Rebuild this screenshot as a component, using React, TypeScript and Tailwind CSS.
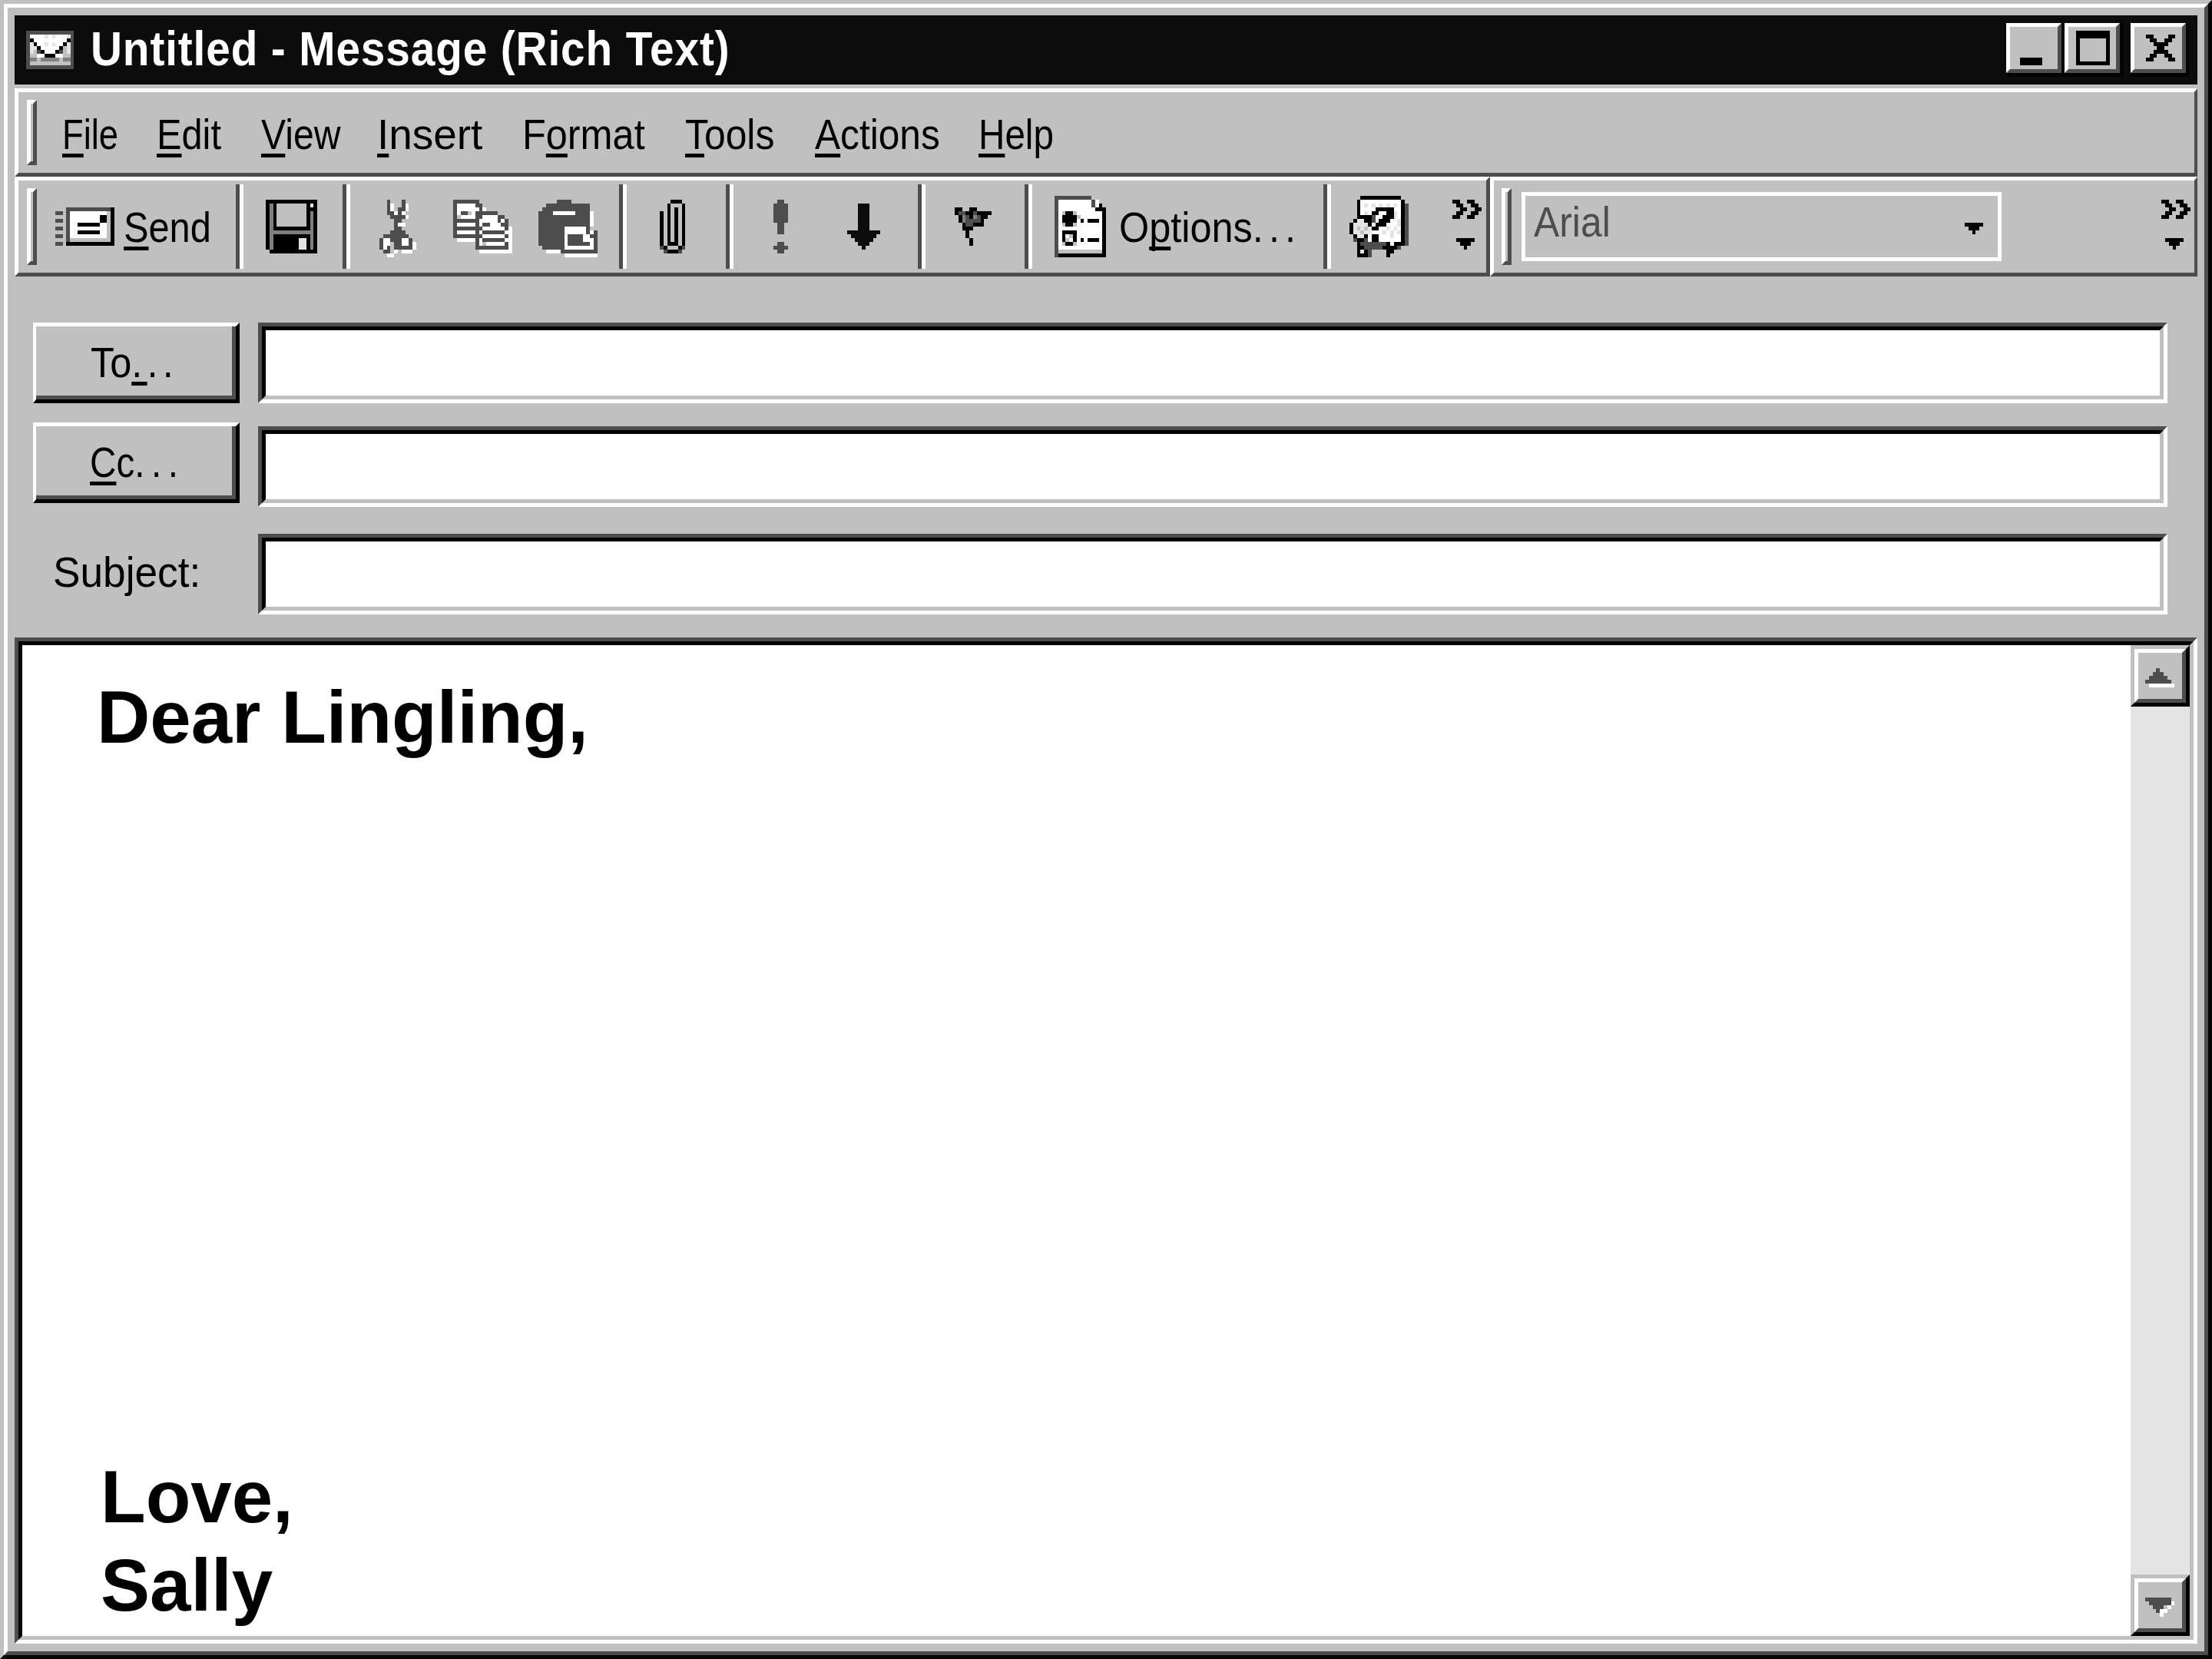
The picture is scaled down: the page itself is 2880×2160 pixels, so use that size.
import type { ReactNode } from 'react';

const COLORS: Record<string, string> = {
  k: '#000000',
  n: '#0c0c0c',
  d: '#4d4d4d',
  m: '#808080',
  c: '#c0c0c0',
  l: '#e4e4e4',
  w: '#ffffff',
};

// source bitmap was 600x450 blown up 4.8 times
function Bitmap({ rows, className = '' }: { rows: string[]; className?: string }) {
  const cols = Math.max(...rows.map((r) => r.length));
  return (
    <svg
      className={`shrink-0 ${className}`}
      style={{ width: cols * 4.8, height: rows.length * 5 }}
      viewBox={`0 0 ${cols} ${rows.length}`}
      preserveAspectRatio="none"
      shapeRendering="crispEdges"
    >
      {rows.map((row, y) =>
        row.split('').map((ch, x) =>
          COLORS[ch] ? <rect key={`${x}-${y}`} x={x} y={y} width={1.02} height={1.02} fill={COLORS[ch]} /> : null,
        ),
      )}
    </svg>
  );
}

const ENVELOPE = [
  'ddddddddddddd',
  'dwwwwlwlwwwld',
  'dkwwwwwwwwwkd',
  'dlkwwlwlwwkld',
  'dllkwwwwwkcld',
  'dlcdkwwwkdcld',
  'dccwwkkkwwccd',
  'dmmcmmmmmcmmd',
  'dcccccccccccd',
  'ddddddddddddd',
];
const SEND = [
  '...ddddddddddddk',
  'dd.dwwwwwwwwww.k',
  '...dwwwwwwwwkk.k',
  'dd.dwwwwwwwwkk.k',
  '...dwwkkkkkkww.k',
  'dd.dwwwwwwwwww.k',
  '...dwwkkkkkkww.k',
  'dd.dwwwwwwwwww.k',
  '...d...........k',
  'dd.kkkkkkkkkkkkk',
];
const FLOPPY = [
  'kkkkkkkkkkkkkk',
  'kmk........klk',
  'kmk........kkk',
  'kmk........kmk',
  'kmk........kmk',
  'kmk........kmk',
  'kmk........kmk',
  'kmkkkkkkkkkkmk',
  'kmmmmmmmmmmmmk',
  'kmkkkkkkkkkkmk',
  'kmkkkkkkkllkmk',
  'kmkkkkkkkllkmk',
  'kmkkkkkkkllkmk',
  '.kkkkkkkkkkkkk',
];
const SCISSORS = [
  '..d...d...',
  '..dw..dw..',
  '..dw.ddw..',
  '..ddwdw...',
  '...ddddw..',
  '....dd....',
  '....dww...',
  '....dd....',
  '...dddd...',
  '.ddddddd..',
  'dwwdddwwd.',
  'dww.ddwwdw',
  'dwd.dddddw',
  '.dd.w.www.',
  '..ww......',
];
const COPY = [
  'ddddddd.........',
  'dwwwwwdd........',
  'dwwwwwwdw.......',
  'dwdd.wdddddd....',
  'd.wwwwddwwwwdd..',
  'dddddddwwwwwdwd.',
  'dwwwwwdwddwwwdd.',
  'ddddddddwwwwwwdw',
  'dwwwwwdwddddddww',
  'ddddddddwwwwwwdw',
  '.wwwwwdwddddddww',
  '......dw.wwwwwdw',
  '......dddddddddw',
  '.......wwwwwwwww',
];
const PASTE = [
  '.....dddd.......',
  '..dddddddddddd..',
  '.ddddddddddddd..',
  'ddddwwwwwwddddw.',
  'ddddddddddddddw.',
  'ddddddddddddddw.',
  'ddddddddddddddw.',
  'dddddddwwwwwwd..',
  'dddddddwwwwwwdwd',
  'dddddddwddddwwdd',
  'dddddddwddddwwwd',
  'dddddddwddddddwd',
  '.ddddddwwwwwwwwd',
  '..wwwwdddddddddd',
  '.......wwwwwwwww',
];
const CLIP = [
  '...kkk.',
  '..k...k',
  '..k.k.k',
  'k.k.k.k',
  'k.k.k.k',
  'k.k.k.k',
  'k.k.k.k',
  'k.k.k.k',
  'k.k.k.k',
  'k.k.k.k',
  'k.k.k.k',
  'k.kkk.k',
  'dk...kd',
  '.dkkkd.',
];
const IMPORTANT = ['.dd.', 'dddd', 'dddd', 'dddd', 'dddd', 'dddd', '.dd.', '.dd.', '.dd.', '....', '....', '.dd.', 'dddd', '.dd.'];
const LOW = [
  '...nnn...',
  '...nnn...',
  '...nnn...',
  '...nnn...',
  '...nnn...',
  '...nnn...',
  '...nnn...',
  'nnnnnnnnn',
  '.nnnnnnn.',
  '..nnnnn..',
  '...nnn...',
  '....n....',
];
const FLAG = [
  'kk..kk....',
  'kddkkdkkkk',
  '.kmdkmdkk.',
  '.kmddddk..',
  '..kddkkk..',
  '..kkk.....',
  '...k......',
  '...k......',
  '....k.....',
  '....k.....',
];
const OPTIONS = [
  'dddddddddd....',
  'dwwwwwwwwwdw..',
  'dwwwwwwwwwdwk.',
  'dwwwwwwwwwwkkk',
  'dw.kk.wwwwwwwk',
  'dwkkkk.wwwwwwk',
  'dwkkkkwkwkkkwk',
  'dw.kk.wwwwwwwk',
  'dwwwwwwwwwwwwk',
  'dwkkkkwwwwwwwk',
  'dwkw.kwwwwwwwk',
  'dwk.wkwkwkkkwk',
  'dw.kk.wwwwwwwk',
  'dwwwwwwwwwwwwk',
  'd............k',
  'dkkkkkkkkkkkkk',
];
const HELP = [
  '...kkkkkkkkkkk..',
  '..kwwwwwwwwwwwk.',
  '..kwlwlwlwlwlwkd',
  '..kwwwwkkkkkwwkd',
  '..kwlwkkwwkklwkd',
  '..kkkkdwwkkklwkd',
  '.kllkkdwkkkwwlkd',
  'kllllkwkkkwwwlkd',
  'klclclkkwwlwlwkd',
  'kllcllwwwlwlwlkd',
  '.kllkwkkwwwlwwkd',
  '.dkkdwkkwwwwwwkd',
  '..kdddddddkwkkkd',
  '..kkdddddkkkkd..',
  '..klkd....kk....',
  '..kkkd....k.....',
];
const CHEVRON = ['kk..kk..', '.kk..kk.', '..kk..kk', '.kk..kk.', 'kk..kk..'];
const DROP = ['kkkkk', '.kkk.', '..k..'];
const CLOSE = ['kk....kk', '.kk..kk.', '..kkkk..', '...kk...', '..kkkk..', '.kk..kk.', 'kk....kk'];
const SCROLL_UP = ['...d....', '..ddd...', '.ddddd..', 'ddddddd.', '.wwwwwww'];
const SCROLL_DOWN = ['ddddddd.', '.ddddddw', '..ddd.w.', '...dww..', '....w...'];

const UI_FONT = "font-['Liberation_Sans',sans-serif]";

function Key({ children }: { children: ReactNode }) {
  return <span className="underline decoration-[5px] underline-offset-[6px] [text-decoration-skip-ink:none]">{children}</span>;
}

function Dots({ className, children = '...' }: { className: string; children?: ReactNode }) {
  return <span className={className}>{children}</span>;
}

function Gripper({ className = '' }: { className?: string }) {
  return <div className={`w-[13px] mt-[10px] shrink-0 border-t-[5px] border-l-[5px] border-t-white border-l-white border-r-[5px] border-b-[5px] border-r-[#4d4d4d] border-b-[#4d4d4d] ${className}`} />;
}

function Sep({ className = '' }: { className?: string }) {
  return <div className={`w-[10px] h-[110px] mt-[5px] shrink-0 border-l-[5px] border-r-[5px] border-l-[#4d4d4d] border-r-white ${className}`} />;
}

function Overflow({ className = '' }: { className?: string }) {
  return (
    <div className={`flex flex-col items-start shrink-0 mt-[25px] ${className}`}>
      <Bitmap rows={CHEVRON} />
      <Bitmap rows={DROP} className="mt-[25px] ml-[5px]" />
    </div>
  );
}

function CaptionButton({ children, className = '' }: { children: ReactNode; className?: string }) {
  return (
    <div className={`w-[77px] h-[70px] shrink-0 border-r-[5px] border-b-[5px] border-r-[#050505] border-b-[#050505] ${className}`}>
      <div className="w-full h-full flex bg-[#c0c0c0] border-t-[5px] border-l-[5px] border-t-white border-l-white border-r-[5px] border-b-[5px] border-r-[#4d4d4d] border-b-[#4d4d4d]">
        {children}
      </div>
    </div>
  );
}

function RaisedButton({ children }: { children: ReactNode }) {
  return (
    <div className="w-[269px] h-[105px] shrink-0 border-t-[5px] border-l-[4px] border-t-white border-l-white border-r-[5px] border-b-[5px] border-r-black border-b-black">
      <div className={`w-full h-full flex items-start pt-[19px] text-[56px] leading-none text-black border-r-[5px] border-b-[5px] border-r-[#4d4d4d] border-b-[#4d4d4d] ${UI_FONT}`}>
        {children}
      </div>
    </div>
  );
}

function Field({ className = '' }: { className?: string }) {
  return (
    <div className={`flex-1 h-[105px] border-t-[5px] border-l-[5px] border-t-[#4d4d4d] border-l-[#4d4d4d] border-r-[5px] border-b-[5px] border-r-white border-b-white ${className}`}>
      <div className="w-full h-full bg-white border-t-[5px] border-l-[5px] border-t-black border-l-black border-r-[5px] border-b-[5px] border-r-[#c0c0c0] border-b-[#c0c0c0]" />
    </div>
  );
}

function ScrollButton({ rows }: { rows: string[] }) {
  return (
    <div className="w-full h-[80px] shrink-0 border-t-[5px] border-l-[5px] border-t-[#c0c0c0] border-l-[#c0c0c0] border-r-[5px] border-b-[5px] border-r-black border-b-black">
      <div className="w-full h-full flex items-center justify-center bg-[#c0c0c0] border-t-[5px] border-l-[5px] border-t-white border-l-white border-r-[5px] border-b-[5px] border-r-[#4d4d4d] border-b-[#4d4d4d]">
        <Bitmap rows={rows} className="mt-[4px]" />
      </div>
    </div>
  );
}

const MENUS: { box: string; text: string; label: ReactNode }[] = [
  { box: 'w-[123px]', text: 'scale-x-[0.81]', label: <><Key>F</Key>ile</> },
  { box: 'w-[136px]', text: 'scale-x-[0.87]', label: <><Key>E</Key>dit</> },
  { box: 'w-[151px]', text: 'scale-x-[0.86]', label: <><Key>V</Key>iew</> },
  { box: 'w-[189px]', text: 'scale-x-[0.98]', label: <><Key>I</Key>nsert</> },
  { box: 'w-[212px]', text: 'scale-x-[0.90]', label: <>F<Key>o</Key>rmat</> },
  { box: 'w-[169px]', text: 'scale-x-[0.89]', label: <><Key>T</Key>ools</> },
  { box: 'w-[213px]', text: 'scale-x-[0.886]', label: <><Key>A</Key>ctions</> },
  { box: 'w-[110px]', text: 'scale-x-[0.85]', label: <><Key>H</Key>elp</> },
];

export default function App() {
  return (
    <div className="w-[2880px] h-[2160px] bg-[#c0c0c0] border-t-[5px] border-l-[5px] border-t-[#c0c0c0] border-l-[#c0c0c0] border-r-[5px] border-b-[5px] border-r-[#050505] border-b-[#050505]">
      <div className="w-full h-full flex flex-col pt-[10px] pb-[10px] pl-[9px] pr-[9px] border-t-[5px] border-l-[5px] border-t-white border-l-white border-r-[5px] border-b-[5px] border-r-[#4d4d4d] border-b-[#4d4d4d]">
        {/* Title bar */}
        <div className="h-[90px] shrink-0 flex items-start bg-[#0c0c0c]">
          <Bitmap rows={ENVELOPE} className="mt-[20px] ml-[15px]" />
          <span className="ml-[22px] mt-[12px] inline-block origin-left scale-x-[0.9] whitespace-nowrap text-[63px] leading-none font-bold text-white tracking-[1px] font-['Liberation_Sans',sans-serif]">
            Untitled - Message (Rich Text)
          </span>
          <div className="flex ml-auto mt-[10px] mr-[10px]">
            <CaptionButton>
              <div className="w-[29px] h-[10px] ml-[13px] mt-[40px] bg-black" />
            </CaptionButton>
            <CaptionButton className="-ml-[1px]">
              <div className="w-[44px] h-[45px] ml-[10px] mt-[5px] border-[5px] border-t-[10px] border-black" />
            </CaptionButton>
            <CaptionButton className="ml-[9px]">
              <Bitmap rows={CLOSE} className="ml-[15px] mt-[10px]" />
            </CaptionButton>
          </div>
        </div>

        {/* Menu bar */}
        <div className={`h-[115px] mt-[5px] shrink-0 flex items-start text-[56px] leading-none text-black border-t-[5px] border-l-[5px] border-t-white border-l-white border-r-[4px] border-b-[5px] border-r-[#4d4d4d] border-b-[#4d4d4d] ${UI_FONT}`}>
          <Gripper className="ml-[11px] h-[85px]" />
          <div className="flex ml-[33px] mt-[27px]">
            {MENUS.map((m, i) => (
              <div key={i} className={m.box}>
                <span className={`inline-block origin-left whitespace-nowrap ${m.text}`}>{m.label}</span>
              </div>
            ))}
          </div>
        </div>

        {/* Toolbars */}
        <div className={`h-[130px] shrink-0 flex text-[56px] leading-none text-black ${UI_FONT}`}>
          <div className="w-[1921px] shrink-0 flex items-start border-t-[5px] border-l-[5px] border-t-white border-l-white border-r-[5px] border-b-[5px] border-r-[#4d4d4d] border-b-[#4d4d4d]">
            <Gripper className="ml-[11px] h-[100px]" />
            <Bitmap rows={SEND} className="ml-[24px] mt-[35px]" />
            <div className="w-[158px] shrink-0 pl-[12px] mt-[33px]">
              <span className="inline-block origin-left scale-x-[0.87] whitespace-nowrap">
                <Key>S</Key>end
              </span>
            </div>
            <Sep />
            <Bitmap rows={FLOPPY} className="ml-[29px] mt-[25px]" />
            <Sep className="ml-[33px]" />
            <Bitmap rows={SCISSORS} className="ml-[38px] mt-[25px]" />
            <Bitmap rows={COPY} className="ml-[48px] mt-[25px]" />
            <Bitmap rows={PASTE} className="ml-[34px] mt-[25px]" />
            <Sep className="ml-[28px]" />
            <Bitmap rows={CLIP} className="ml-[43px] mt-[25px]" />
            <Sep className="ml-[53px]" />
            <Bitmap rows={IMPORTANT} className="ml-[52px] mt-[25px]" />
            <Bitmap rows={LOW} className="ml-[77px] mt-[30px]" />
            <Sep className="ml-[48px]" />
            <Bitmap rows={FLAG} className="ml-[38px] mt-[35px]" />
            <Sep className="ml-[43px]" />
            <Bitmap rows={OPTIONS} className="ml-[29px] mt-[20px]" />
            <div className="w-[283px] shrink-0 pl-[17px] mt-[33px]">
              <span className="inline-block origin-left scale-x-[0.9] whitespace-nowrap">
                O<Key>p</Key>tions<Dots className="tracking-[8px]" />
              </span>
            </div>
            <Sep />
            <Bitmap rows={HELP} className="ml-[24px] mt-[20px]" />
            <Overflow className="ml-[57px]" />
          </div>
          <div className="flex-1 flex items-start border-t-[5px] border-l-[5px] border-t-white border-l-white border-r-[4px] border-b-[5px] border-r-[#4d4d4d] border-b-[#4d4d4d]">
            <Gripper className="ml-[10px] h-[100px]" />
            <div className="w-[625px] h-[90px] ml-[13px] mt-[15px] shrink-0 flex items-start border-[5px] border-white">
              <span className="ml-[11px] mt-[6px] inline-block origin-left scale-x-[0.89] text-[#4d4d4d]">Arial</span>
              <Bitmap rows={DROP} className="ml-auto mr-[19px] mt-[35px]" />
            </div>
            <Overflow className="ml-auto mr-[5px]" />
          </div>
        </div>

        {/* Address fields */}
        <div className="shrink-0 flex flex-col pl-[24px] pr-[39px] pt-[60px] pb-[30px]">
          <div className="flex h-[105px] gap-[24px]">
            <RaisedButton>
              <span className="ml-[71px] inline-block origin-left scale-x-[0.9] whitespace-nowrap">
                To<span className="tracking-[7px]"><Key>.</Key>..</span>
              </span>
            </RaisedButton>
            <Field />
          </div>
          <div className="flex h-[110px] gap-[24px] mt-[25px]">
            <RaisedButton>
              <span className="ml-[70px] inline-block origin-left scale-x-[0.85] whitespace-nowrap">
                <Key>C</Key>c<Dots className="tracking-[10px]" />
              </span>
            </RaisedButton>
            <Field className="mt-[5px]" />
          </div>
          <div className="flex h-[105px] gap-[24px] mt-[35px]">
            <div className={`w-[269px] shrink-0 pl-[26px] pt-[22px] text-[56px] leading-none text-black ${UI_FONT}`}>
              <span className="inline-block origin-left scale-x-[0.95] whitespace-nowrap">Subject:</span>
            </div>
            <Field />
          </div>
        </div>

        {/* Message body */}
        <div className="flex-1 min-h-0 border-t-[5px] border-l-[5px] border-t-[#4d4d4d] border-l-[#4d4d4d] border-r-[5px] border-b-[5px] border-r-white border-b-white">
          <div className="w-full h-full flex border-t-[5px] border-l-[5px] border-t-black border-l-black border-r-[5px] border-b-[5px] border-r-[#c0c0c0] border-b-[#c0c0c0]">
            <div className="flex-1 flex flex-col justify-between bg-white text-[96px] leading-[115px] font-bold text-black font-['Liberation_Sans',sans-serif] pt-[36px] pb-[9px]">
              <div className="pl-[97px]">Dear Lingling,</div>
              <div className="pl-[102px]">
                <div>Love,</div>
                <div>Sally</div>
              </div>
            </div>
            <div className="w-[77px] shrink-0 flex flex-col bg-[#e4e4e4]">
              <ScrollButton rows={SCROLL_UP} />
              <div className="flex-1" />
              <ScrollButton rows={SCROLL_DOWN} />
            </div>
          </div>
        </div>
      </div>
    </div>
  );
}
